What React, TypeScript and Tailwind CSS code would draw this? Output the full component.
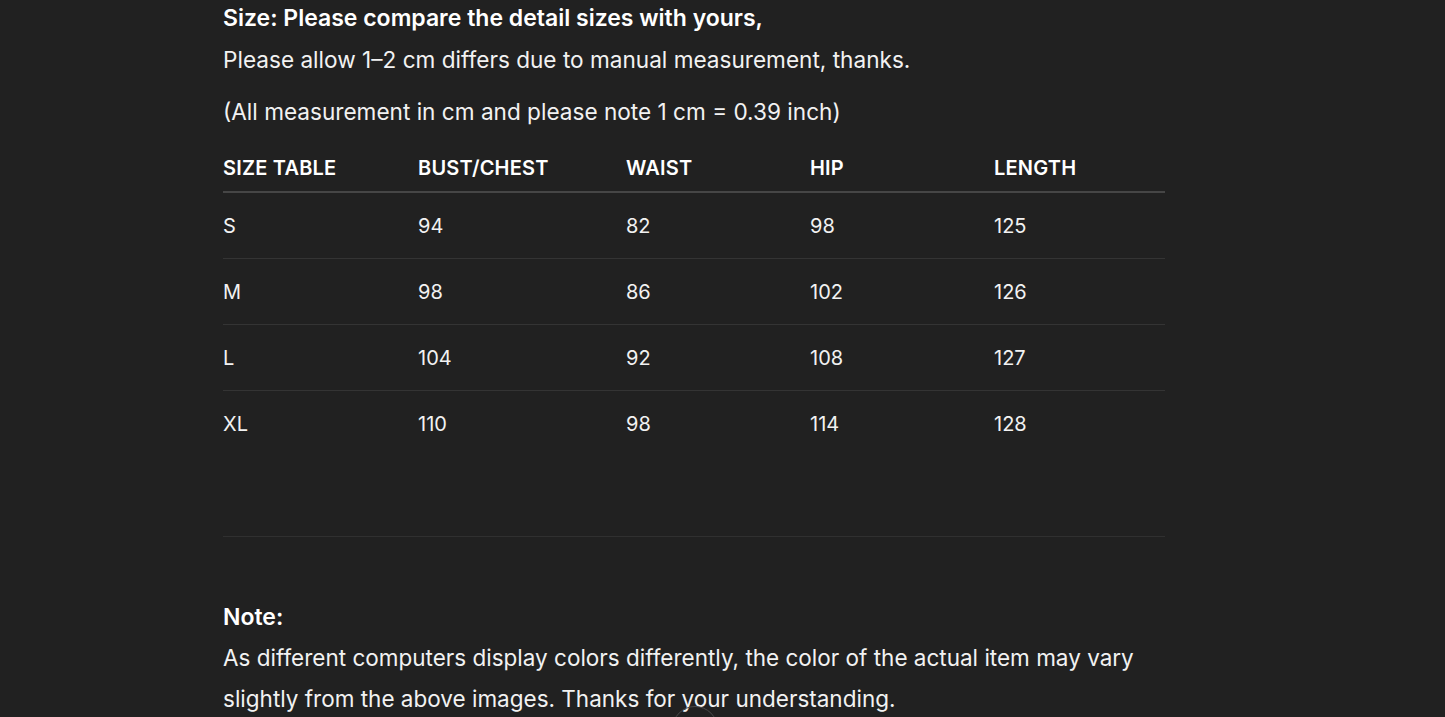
const rows = [
  ["S", "94", "82", "98", "125"],
  ["M", "98", "86", "102", "126"],
  ["L", "104", "92", "108", "127"],
  ["XL", "110", "98", "114", "128"],
];

const heads = ["SIZE TABLE", "BUST/CHEST", "WAIST", "HIP", "LENGTH"];
const colW = ["w-[195px]", "w-[208px]", "w-[184px]", "w-[184px]", "w-[171px]"];

export default function App() {
  return (
    <div className="relative h-[717px] overflow-hidden bg-[#212121] text-[#f2f2f2] font-['Inter','Liberation_Sans',sans-serif]">
      <div className="ml-[223px] w-[942px]">
        <p className="text-[23px] font-semibold leading-[36px] text-white">
          Size: Please compare the detail sizes with yours,
        </p>
        <p className="text-[22.6px] leading-[48px]">
          Please allow 1–2 cm differs due to manual measurement, thanks.
        </p>
        <p className="mt-[4px] text-[22.6px] leading-[48px]">
          (All measurement in cm and please note 1 cm = 0.39 inch)
        </p>

        <table className="mt-2 w-full border-collapse text-[20px]">
          <thead>
            <tr className="border-b-2 border-[#464646]">
              {heads.map((h, i) => (
                <th key={h} className={`${colW[i]} h-[48px] p-0 text-left font-semibold tracking-[0.2px] text-white`}>
                  {h}
                </th>
              ))}
            </tr>
          </thead>
          <tbody>
            {rows.map((r, ri) => (
              <tr key={r[0]} className={ri < rows.length - 1 ? "border-b border-[#343434]" : ""}>
                {r.map((c, ci) => (
                  <td key={ci} className="h-[66px] p-0 pt-[2px] text-left">
                    {c}
                  </td>
                ))}
              </tr>
            ))}
          </tbody>
        </table>

        <div className="mt-[80px] h-px bg-[#303030]" />

        <p className="mt-[60px] text-[23px] font-semibold leading-[40px] text-white">Note:</p>
        <p className="text-[22.5px] leading-[41px]">
          As different computers display colors differently, the color of the actual item may vary
          slightly from the above images. Thanks for your understanding.
        </p>
      </div>

      {/* scroll-top button peeking in at the bottom */}
      <div className="absolute left-[672px] top-[706px] h-[46px] w-[46px] rounded-full border border-[#4a4a4a]" />
    </div>
  );
}
